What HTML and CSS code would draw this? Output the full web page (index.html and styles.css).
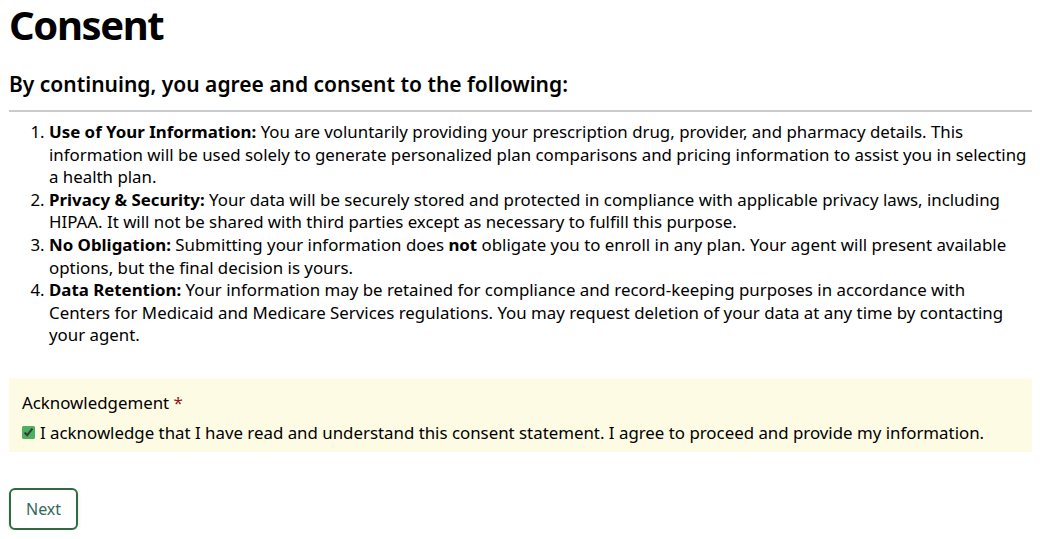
FILE: index.html
```html
<!DOCTYPE html>
<html lang="en">

<head>
    <meta charset="UTF-8">
    <meta name="viewport" content="width=device-width, initial-scale=1.0">
    <title>Consent</title>

    <link rel="stylesheet" href="styles.css">
</head>

<body>
    <main class="consent">
        <h1 class="title">Consent</h1>
        <h2 class="subtitle">By continuing, you agree and consent to the following:</h2>

        <ol class="terms">
            <li><b>Use of Your Information:</b> You are voluntarily providing your prescription drug, provider, and pharmacy details. This information will be used solely to generate personalized plan comparisons and pricing information to assist you in selecting a health plan.</li>
            <li><b>Privacy &amp; Security:</b> Your data will be securely stored and protected in compliance with applicable privacy laws, including HIPAA. It will not be shared with third parties except as necessary to fulfill this purpose.</li>
            <li><b>No Obligation:</b> Submitting your information does <b>not</b> obligate you to enroll in any plan. Your agent will present available options, but the final decision is yours.</li>
            <li><b>Data Retention:</b> Your information may be retained for compliance and record-keeping purposes in accordance with Centers for Medicaid and Medicare Services regulations. You may request deletion of your data at any time by contacting your agent.</li>
        </ol>

        <form class="ack" action="#" method="post">
            <p class="ack-label">Acknowledgement <span class="req">*</span></p>
            <label class="ack-check">
                <input type="checkbox" checked>
                <span>I acknowledge that I have read and understand this consent statement. I agree to proceed and provide my information.</span>
            </label>
        </form>

        <button type="button" class="next">Next</button>
    </main>
</body>

</html>
```

FILE: styles.css
```css
body {
    margin: 8px;
    font-family: 'Noto Sans', 'Open Sans', sans-serif;
    color: #000;
    background: #fff;
}

.consent {
    padding-left: 1px;
}

.title {
    font-size: 40px;
    font-weight: 700;
    letter-spacing: -1.4px;
    margin: 0;
    line-height: 33px;
}

.subtitle {
    font-size: 21px;
    font-weight: 600;
    margin: 29px 0 0;
    line-height: 28px;
    padding-bottom: 12px;
    border-bottom: 2px solid #c9cbcf;
}

.terms {
    font-size: 16.85px;
    line-height: 22.6px;
    margin: 9px 0 0;
    padding-left: 40px;
    padding-right: 3px;
}

.ack {
    margin-top: 31px;
    background-color: #fdfbe3;
    padding: 14px 13px 8px;
}

.ack-label {
    margin: 0 0 7px;
    font-size: 16.85px;
    line-height: 22.6px;
}

.req {
    color: #8b1a1a;
}

.ack-check {
    display: flex;
    align-items: center;
    gap: 5px;
    font-size: 16.85px;
    line-height: 22.6px;
}

.ack-check input {
    margin: 0;
    width: 13px;
    height: 13px;
    accent-color: #4cb061;
}

.next {
    margin-top: 36px;
    font-family: inherit;
    font-size: 16px;
    line-height: 22px;
    color: #35685a;
    background: #fff;
    border: 2px solid #2e6b3e;
    border-radius: 6px;
    padding: 8px 15px;
    box-shadow: 0 2px 4px rgba(0, 0, 0, 0.12);
}
```
